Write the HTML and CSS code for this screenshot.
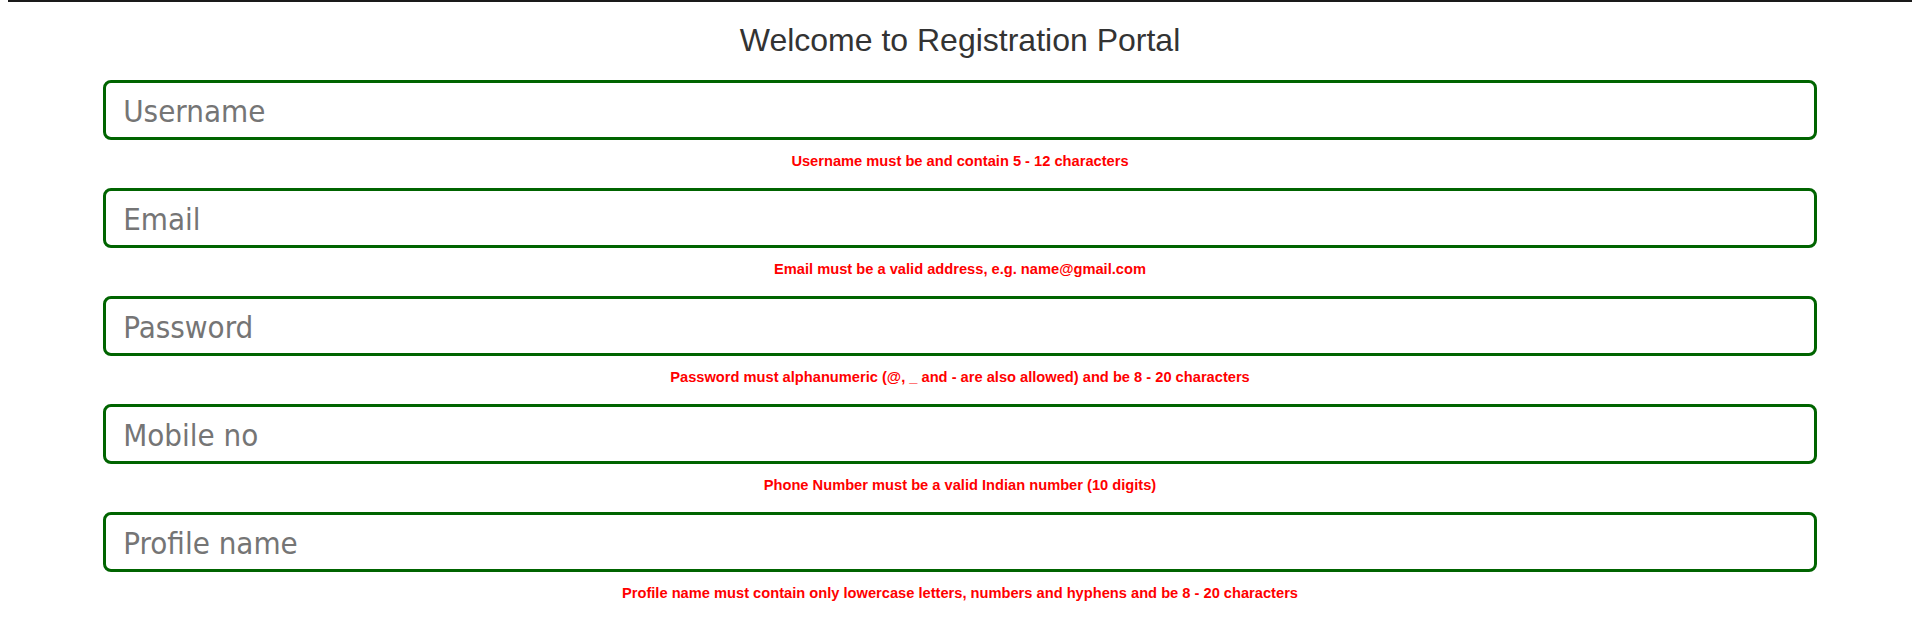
FILE: index.html
```html
<!DOCTYPE html>
<html lang="en">
<head>
<meta charset="utf-8">
<title>Registration Portal</title>
<link rel="stylesheet" href="styles.css">
</head>
<body>
<div class="topbar"></div>
<h1 class="title">Welcome to Registration Portal</h1>
<form class="form">
  <div class="field">
    <input class="input" type="text" placeholder="Username">
    <p class="error">Username must be and contain 5 - 12 characters</p>
  </div>
  <div class="field">
    <input class="input" type="text" placeholder="Email">
    <p class="error">Email must be a valid address, e.g. name@gmail.com</p>
  </div>
  <div class="field">
    <input class="input" type="password" placeholder="Password">
    <p class="error">Password must alphanumeric (@, _ and - are also allowed) and be 8 - 20 characters</p>
  </div>
  <div class="field">
    <input class="input" type="text" placeholder="Mobile no">
    <p class="error">Phone Number must be a valid Indian number (10 digits)</p>
  </div>
  <div class="field">
    <input class="input" type="text" placeholder="Profile name">
    <p class="error">Profile name must contain only lowercase letters, numbers and hyphens and be 8 - 20 characters</p>
  </div>
</form>
</body>
</html>
```

FILE: styles.css
```css
html, body {
  background: #ffffff;
}
body {
  margin: 0 8px 8px 8px;
  font-family: "Liberation Sans", Arial, sans-serif;
}
.topbar {
  height: 2px;
  background: #1a1a1a;
  margin: 0 -8px;
}
.title {
  margin: 20px 0 21px 0;
  font-size: 32px;
  font-weight: normal;
  line-height: 37px;
  color: #333333;
  text-align: center;
}
.form {
  width: 90%;
  margin: 0 auto;
}
.field {
  display: flex;
  flex-direction: column;
}
.input {
  box-sizing: border-box;
  width: 100%;
  height: 60px;
  border: 3px solid #006400;
  border-radius: 8px;
  padding: 2px 17px 0 17px;
  font-family: "DejaVu Sans Condensed", "DejaVu Sans", sans-serif;
  font-size: 31px;
  color: #333;
  outline: none;
  background: #fff;
}
.input::placeholder {
  color: #757575;
}
.error {
  margin: 13px 0 18px 0;
  font-size: 14.67px;
  line-height: 17px;
  font-weight: bold;
  color: #ff0000;
  text-align: center;
}
```
